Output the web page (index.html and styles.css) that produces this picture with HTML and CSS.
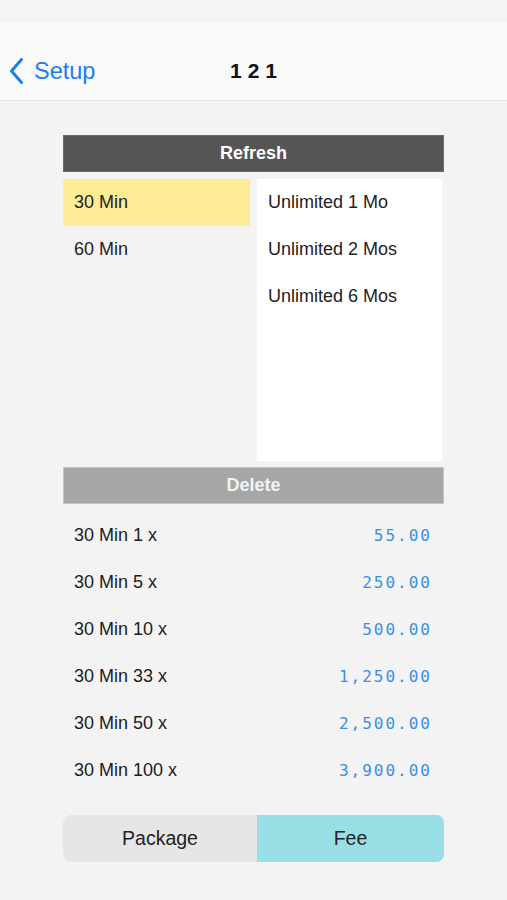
FILE: index.html
```html
<!DOCTYPE html>
<html>
<head>
<meta charset="utf-8">
<link rel="stylesheet" href="styles.css">
</head>
<body>
<div class="status"></div>
<header class="nav">
  <div class="back">
    <svg class="chev" width="15" height="28" viewBox="0 0 15 28"><path d="M12.5 2.5 L2.5 14 L12.5 25.5" fill="none" stroke="#1a7ef0" stroke-width="3" stroke-linecap="round" stroke-linejoin="round"/></svg>
    <span>Setup</span>
  </div>
  <div class="title">121</div>
</header>
<main class="content">
  <div class="bar dark">Refresh</div>
  <div class="lists">
    <div class="col left">
      <div class="item sel">30 Min</div>
      <div class="item">60 Min</div>
    </div>
    <div class="col right">
      <div class="item">Unlimited 1 Mo</div>
      <div class="item">Unlimited 2 Mos</div>
      <div class="item">Unlimited 6 Mos</div>
    </div>
  </div>
  <div class="bar light">Delete</div>
  <div class="rows">
    <div class="row"><span>30 Min 1 x</span><span class="num">55.00</span></div>
    <div class="row"><span>30 Min 5 x</span><span class="num">250.00</span></div>
    <div class="row"><span>30 Min 10 x</span><span class="num">500.00</span></div>
    <div class="row"><span>30 Min 33 x</span><span class="num">1,250.00</span></div>
    <div class="row"><span>30 Min 50 x</span><span class="num">2,500.00</span></div>
    <div class="row"><span>30 Min 100 x</span><span class="num">3,900.00</span></div>
  </div>
  <div class="seg">
    <div class="segitem pkg">Package</div>
    <div class="segitem on">Fee</div>
  </div>
</main>
</body>
</html>
```
FILE: styles.css
```css
* { box-sizing: border-box; }
html, body { margin: 0; padding: 0; }
body {
  width: 507px;
  height: 900px;
  background: #f3f3f3;
  font-family: "Liberation Sans", Arial, sans-serif;
  color: #1c1c1c;
  overflow: hidden;
}
.status { height: 22px; background: #f4f4f4; }
.nav {
  height: 79px;
  background: #f9f9f9;
  border-bottom: 1px solid #e2e2e2;
  display: flex;
  align-items: flex-end;
  padding-bottom: 15px;
  position: relative;
}
.back {
  display: flex;
  align-items: center;
  gap: 10px;
  padding-left: 9px;
  color: #1a7ef0;
  font-size: 23.5px;
}
.chev { display: block; }
.title {
  position: absolute;
  left: 230px;
  bottom: 17px;
  font-size: 21px;
  font-weight: bold;
  letter-spacing: 6px;
  color: #111;
}
.content {
  width: 381px;
  margin: 34px 0 0 63px;
}
.bar {
  height: 37px;
  display: flex;
  align-items: center;
  justify-content: center;
  color: #fff;
  font-size: 18px;
  font-weight: bold;
}
.dark { background: #555555; border: 1px solid #6a6a6a; }
.light { background: #a6a6a6; border: 1px solid #c4c4c4; color: #f2f2f2; }
.lists {
  display: flex;
  justify-content: space-between;
  padding: 7px 2px 6px 0;
  height: 295px;
}
.col { display: flex; flex-direction: column; }
.left { width: 187px; }
.right { width: 185px; background: #ffffff; }
.item {
  height: 47px;
  display: flex;
  align-items: center;
  padding-left: 11px;
  font-size: 18px;
  color: #222;
}
.sel { background: #fdeb95; }
.rows { padding-top: 8px; }
.row {
  height: 47px;
  display: flex;
  align-items: center;
  justify-content: space-between;
  padding: 0 12px 0 11px;
  font-size: 18px;
  color: #1c1c1c;
}
.num {
  font-family: "DejaVu Sans Mono", "Liberation Mono", monospace;
  color: #3a8fe3;
  font-size: 16px;
  letter-spacing: 2px;
}
.seg {
  margin-top: 21px;
  height: 47px;
  display: flex;
  border-radius: 8px;
  overflow: hidden;
  background: #e6e6e6;
}
.segitem {
  display: flex;
  align-items: center;
  justify-content: center;
  font-size: 19.5px;
  color: #222;
}
.pkg { width: 194px; }
.on { flex: 1; background: #97dfe4; }
```
